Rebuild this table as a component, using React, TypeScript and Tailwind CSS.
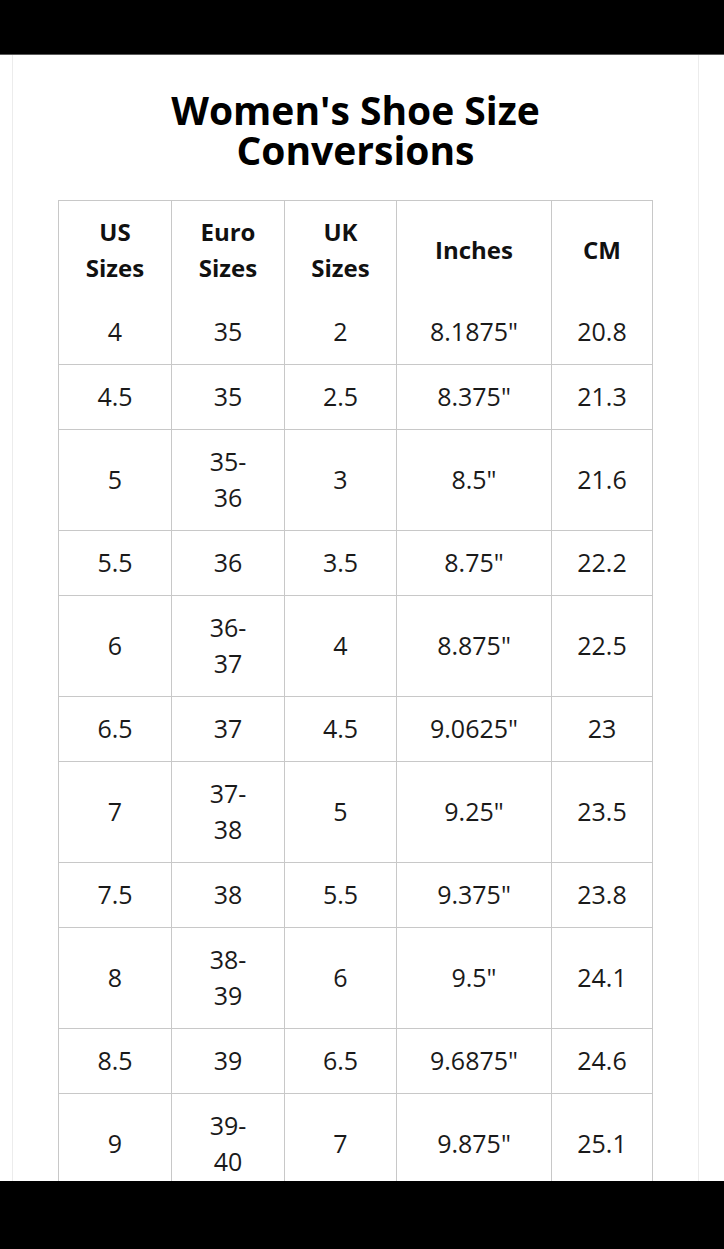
import React from 'react';

type Row = { us: string; euro: string[]; uk: string; inches: string; cm: string };

const rows: Row[] = [
  { us: '4', euro: ['35'], uk: '2', inches: '8.1875"', cm: '20.8' },
  { us: '4.5', euro: ['35'], uk: '2.5', inches: '8.375"', cm: '21.3' },
  { us: '5', euro: ['35-', '36'], uk: '3', inches: '8.5"', cm: '21.6' },
  { us: '5.5', euro: ['36'], uk: '3.5', inches: '8.75"', cm: '22.2' },
  { us: '6', euro: ['36-', '37'], uk: '4', inches: '8.875"', cm: '22.5' },
  { us: '6.5', euro: ['37'], uk: '4.5', inches: '9.0625"', cm: '23' },
  { us: '7', euro: ['37-', '38'], uk: '5', inches: '9.25"', cm: '23.5' },
  { us: '7.5', euro: ['38'], uk: '5.5', inches: '9.375"', cm: '23.8' },
  { us: '8', euro: ['38-', '39'], uk: '6', inches: '9.5"', cm: '24.1' },
  { us: '8.5', euro: ['39'], uk: '6.5', inches: '9.6875"', cm: '24.6' },
  { us: '9', euro: ['39-', '40'], uk: '7', inches: '9.875"', cm: '25.1' },
];

const headers: string[][] = [['US', 'Sizes'], ['Euro', 'Sizes'], ['UK', 'Sizes'], ['Inches'], ['CM']];

function Lines({ parts }: { parts: string[] }) {
  return (
    <>
      {parts.map((p, i) => (
        <React.Fragment key={i}>
          {i > 0 && <br />}
          {p}
        </React.Fragment>
      ))}
    </>
  );
}

export default function App() {
  return (
    <div
      className="w-[724px] h-[1249px] flex flex-col bg-black overflow-hidden"
      style={{ fontFamily: '"Open Sans", "Liberation Sans", sans-serif' }}
    >
      <div className="h-[55px] shrink-0 bg-black border-b border-[#5a5a5a]" />

      <div className="flex-1 bg-white overflow-hidden">
        <div className="ml-[12px] w-[687px] h-full border-x border-[#ececec] pt-[35px]">
          <h1 className="text-center text-[39px] leading-[40px] font-bold text-black">
            Women's Shoe Size
            <br />
            Conversions
          </h1>

          <table className="mx-auto mt-[30px] w-[594px] table-fixed border-collapse text-center text-[25px] leading-[36px] text-[#1a1a1a]">
            <colgroup>
              <col className="w-[113px]" />
              <col className="w-[113px]" />
              <col className="w-[112px]" />
              <col className="w-[155px]" />
              <col className="w-[101px]" />
            </colgroup>
            <thead>
              <tr>
                {headers.map((h, i) => (
                  <th
                    key={i}
                    className="border border-b-0 border-[#c8c8c8] pt-[13px] pb-[15px] px-1 align-middle font-bold text-[24px] text-[#111]"
                  >
                    <Lines parts={h} />
                  </th>
                ))}
              </tr>
            </thead>
            <tbody>
              {rows.map((r, idx) => (
                <tr key={r.us}>
                  {[[r.us], r.euro, [r.uk], [r.inches], [r.cm]].map((c, i) => (
                    <td
                      key={i}
                      className={
                        'border border-[#c8c8c8] px-1 align-middle font-normal ' +
                        (idx === 0 ? 'border-t-0 pt-[12px] pb-[15px]' : 'pt-[13px] pb-[15px]')
                      }
                    >
                      <Lines parts={c} />
                    </td>
                  ))}
                </tr>
              ))}
            </tbody>
          </table>
        </div>
      </div>

      <div className="h-[68px] shrink-0 bg-black" />
    </div>
  );
}
